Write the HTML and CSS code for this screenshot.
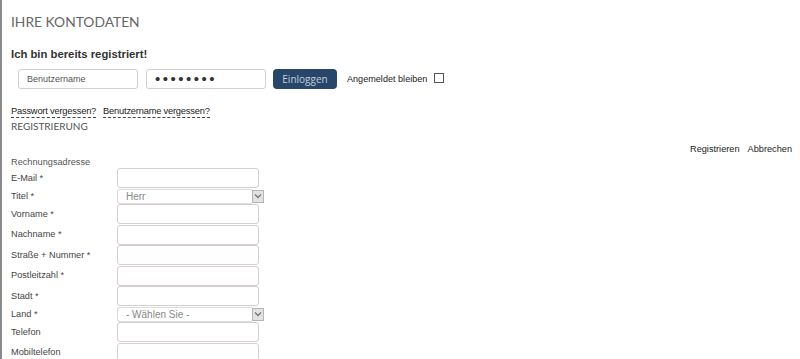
FILE: index.html
```html
<!DOCTYPE html>
<html lang="de">
<head>
<meta charset="utf-8">
<title>Ihre Kontodaten</title>
<link rel="stylesheet" href="styles.css">
</head>
<body>
<div class="page">

<h1 class="title">IHRE KONTODATEN</h1>

<h2 class="subtitle">Ich bin bereits registriert!</h2>

<div class="login">
<input class="field" type="text" placeholder="Benutzername">
<input class="field" type="password" value="geheim12">
<button class="btn" type="button">Einloggen</button>
<label class="remember">Angemeldet bleiben <input class="check" type="checkbox"></label>
</div>

<div class="forgot">
<a class="dashed" href="#">Passwort vergessen?</a>
<a class="dashed" href="#">Benutzername vergessen?</a>
</div>

<h3 class="section">REGISTRIERUNG</h3>

<div class="actions">
<a class="action" href="#">Registrieren</a>
<a class="action" href="#">Abbrechen</a>
</div>

<div class="legend">Rechnungsadresse</div>

<div class="form">
<label class="lbl">E-Mail *</label>
<input class="inp" type="text">

<label class="lbl">Titel *</label>
<div class="sel">
<select class="sel-box"><option>Herr</option><option>Frau</option></select>
<span class="sel-arrow"><svg width="8" height="6" viewBox="0 0 8 6"><path d="M1 1.5 L4 4.5 L7 1.5" fill="none" stroke="#777" stroke-width="1.3"/></svg></span>
</div>

<label class="lbl">Vorname *</label>
<input class="inp" type="text">

<label class="lbl">Nachname *</label>
<input class="inp" type="text">

<label class="lbl">Stra&szlig;e + Nummer *</label>
<input class="inp" type="text">

<label class="lbl">Postleitzahl *</label>
<input class="inp" type="text">

<label class="lbl">Stadt *</label>
<input class="inp" type="text">

<label class="lbl">Land *</label>
<div class="sel">
<select class="sel-box"><option>- W&auml;hlen Sie -</option><option>Deutschland</option></select>
<span class="sel-arrow"><svg width="8" height="6" viewBox="0 0 8 6"><path d="M1 1.5 L4 4.5 L7 1.5" fill="none" stroke="#777" stroke-width="1.3"/></svg></span>
</div>

<label class="lbl">Telefon</label>
<input class="inp" type="text">

<label class="lbl">Mobiltelefon</label>
<input class="inp" type="text">
</div>

</div>
</body>
</html>
```

FILE: styles.css
```css
/* Kontodaten / Registrierung */

body
{ margin: 0;
background-color: #fff;
font-family: "Liberation Sans", Arial, sans-serif;
font-size: 9.2px;
color: #444;
}

div.page
{ border-left: 2px solid #8a8a8a;
padding: 0 8px 0 9px;
min-height: 100vh;
}

h1.title
{ margin: 0;
padding-top: 13px;
height: 27px;
font-family: Lato, "Open Sans", sans-serif;
font-weight: normal;
font-size: 13.8px;
line-height: 18px;
color: #666;
}

h2.subtitle
{ margin: 0;
padding-top: 7px;
height: 15px;
font-size: 11.3px;
line-height: 15px;
font-weight: bold;
color: #333;
}

div.login
{ display: flex;
align-items: center;
gap: 8px;
margin-top: 6px;
padding-left: 7px;
height: 21px;
}

input.field
{ box-sizing: border-box;
width: 120px;
height: 20px;
border: 1px solid #d0d0d0;
border-radius: 3px;
padding: 0 8px;
font-family: "Liberation Sans", Arial, sans-serif;
font-size: 9px;
color: #444;
}

input.field::placeholder
{ color: #555;
}

input.field[type=password]
{ font-size: 15px;
letter-spacing: 2.5px;
color: #333;
}

button.btn
{ box-sizing: border-box;
width: 64px;
height: 20px;
margin-left: -1px;
border: none;
border-radius: 4px;
background-color: #28466a;
color: #c3cedb;
font-family: "Open Sans", Lato, sans-serif;
font-size: 10px;
padding: 0;
}

label.remember
{ display: flex;
align-items: center;
gap: 7px;
margin-left: 2px;
font-size: 9.1px;
color: #222;
}

input.check
{ appearance: none;
width: 10px;
height: 10px;
margin: 0 0 2px 0;
border: 1px solid #555;
background: #fff;
}

div.forgot
{ display: flex;
gap: 7px;
margin-top: 16px;
height: 14px;
}

a.dashed
{ color: #222;
text-decoration: none;
border-bottom: 1px dashed #444;
line-height: 12px;
height: 12px;
font-size: 9.3px;
letter-spacing: -0.2px;
}

h3.section
{ margin: 0;
height: 14px;
font-family: Lato, "Open Sans", sans-serif;
font-weight: normal;
font-size: 10px;
line-height: 14px;
color: #555;
}

div.actions
{ display: flex;
justify-content: flex-end;
gap: 8px;
margin-top: 9px;
height: 14px;
line-height: 14px;
}

a.action
{ color: #222;
text-decoration: none;
font-size: 9.2px;
}

div.legend
{ height: 12px;
line-height: 12px;
font-size: 9.2px;
color: #555;
}

div.form
{ display: grid;
grid-template-columns: 106px 148px;
align-items: center;
row-gap: 0.5px;
margin-top: 0;
}

label.lbl
{ font-size: 9.2px;
line-height: 11px;
color: #444;
}

input.inp
{ box-sizing: border-box;
width: 142px;
height: 20px;
border: 1px solid #d6cdd0;
border-radius: 3px;
padding: 0 5px;
background: #fff;
}

div.sel
{ display: flex;
align-items: center;
height: 15px;
}

select.sel-box
{ appearance: none;
box-sizing: border-box;
width: 135px;
height: 15px;
border: 1px solid #dcdcdc;
border-right: none;
border-radius: 3px 0 0 3px;
background: #fff;
padding: 0 0 0 8px;
font-family: "Liberation Sans", Arial, sans-serif;
font-size: 10px;
line-height: 13px;
color: #888;
}

span.sel-arrow
{ display: flex;
align-items: center;
justify-content: center;
box-sizing: border-box;
width: 12px;
height: 13px;
border: 1px solid #b5b5b5;
background: #e2e2e2;
}
```
